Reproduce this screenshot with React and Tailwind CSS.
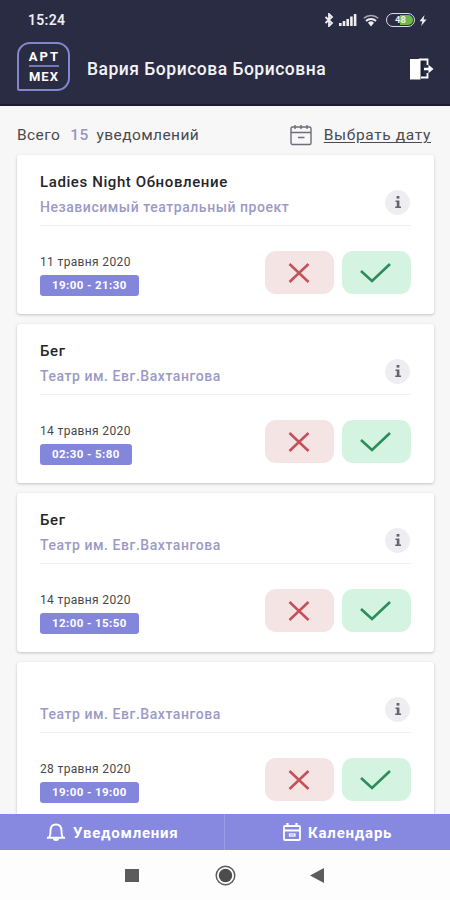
const EVENTS = [
  { id: 1, title: 'Ladies Night Обновление', place: 'Независимый театральный проект', date: '11 травня 2020', time: '19:00 - 21:30' },
  { id: 2, title: 'Бег', place: 'Театр им. Евг.Вахтангова', date: '14 травня 2020', time: '02:30 - 5:80' },
  { id: 3, title: 'Бег', place: 'Театр им. Евг.Вахтангова', date: '14 травня 2020', time: '12:00 - 15:50' },
  { id: 4, title: '', place: 'Театр им. Евг.Вахтангова', date: '28 травня 2020', time: '19:00 - 19:00' },
];

function StatusBar() {
  return (
    <div className="flex h-[38px] items-center pl-7 pr-[23px] pt-[2px] text-[#eeeef3]">
      <span className="text-[14px] font-semibold leading-none tracking-[0.3px]">15:24</span>
      <div className="ml-auto flex items-center">
        <svg className="h-[14px] w-[10px]" viewBox="0 0 10 14" fill="none" stroke="currentColor" strokeWidth="1.8">
          <path d="M1.5 4 8 10 5 13V1l3 3-6.5 6" />
        </svg>
        <svg className="ml-[5px] h-[12px] w-[18px]" viewBox="0 0 18 12" fill="currentColor">
          <rect x="0" y="9" width="2.6" height="3" />
          <rect x="3.7" y="7" width="2.6" height="5" />
          <rect x="7.4" y="5" width="2.6" height="7" />
          <rect x="11.1" y="2.5" width="2.6" height="9.5" />
          <rect x="14.8" y="0" width="2.6" height="12" />
        </svg>
        <svg className="ml-[6px] h-[13px] w-[16px]" viewBox="0 0 16 13" fill="none" stroke="currentColor">
          <path d="M.8 4.3a10.5 10.5 0 0 1 14.4 0" strokeWidth="1.5" opacity=".65" />
          <path d="M3 7a7.3 7.3 0 0 1 10 0" strokeWidth="2" />
          <path d="M5 8.8a4.3 4.3 0 0 1 6 0L8 12.5z" fill="currentColor" stroke="none" />
        </svg>
        <div className="ml-[7px] flex h-[14px] w-[29px] rounded-full border-[1.5px] border-[#dcdce2] p-[1px]">
          <div className="flex w-full items-center justify-center rounded-full bg-linear-to-r from-[#2a2c43] from-50% to-[#6cb848] to-50% text-[9.5px] font-bold leading-none">
            48
          </div>
        </div>
        <svg className="ml-[4px] h-[11px] w-[8px]" viewBox="0 0 8 11" fill="currentColor">
          <path d="M5.5 0 .5 6.3h2.8L2.2 11l5.3-6.5H4.6z" />
        </svg>
      </div>
    </div>
  );
}

function Header() {
  return (
    <header className="h-[106px] shrink-0 border-b-2 border-[#1c1d31] bg-[#2a2c43]">
      <StatusBar />
      <div className="flex h-[62px] items-center pl-[17px] pr-[16px]">
        <div className="mb-[6px] flex h-[49px] w-[53px] flex-col items-center justify-center rounded-[13px] rounded-bl-[2px] border-[2.5px] border-[#8286ca] text-[13px] font-bold leading-none text-white">
          <span className="mr-[-2px] tracking-[2.1px]">АРТ</span>
          <span className="mb-[3px] mt-[2px] h-[2px] w-[30px] bg-[#7377b4]" />
          <span className="mr-[-1px] tracking-[1.1px]">МЕХ</span>
        </div>
        <h1 className="ml-[17px] mt-[2px] whitespace-nowrap text-[17.5px] font-medium leading-none tracking-[0.5px] text-[#f3f3f7]">
          Вария Борисова Борисовна
        </h1>
        <svg className="ml-auto h-[22px] w-[25px]" viewBox="0 0 25 22" fill="none">
          <path d="M1 1h10.500v20.500H1z" fill="#fff" />
          <path d="M10 1.500h8.500v5.500M18.500 15v4.500H12" stroke="#fff" strokeWidth="1.8" />
          <path d="M13 4.500h2.500M13 4.500v12.500h2.500" stroke="#191a2c" strokeWidth="1.4" />
          <path d="M15 9.700h4.500V6.700l5 4.300-5 4.300v-3H15z" fill="#fff" />
        </svg>
      </div>
    </header>
  );
}

function CalendarIcon() {
  return (
    <svg className="mb-[3px] h-[22px] w-[22px]" viewBox="0 0 22 22" fill="none" stroke="#6d6e77" strokeWidth="1.4">
      <rect x="1" y="3" width="20" height="17.5" rx="1.5" />
      <path d="M1 8.5h20M5 1v4M11 1v4M17 1v4M8 13.5h6.5" />
    </svg>
  );
}

function EventCard({ event }) {
  return (
    <article className="h-[159px] shrink-0 rounded-[3px] bg-white px-[23px] shadow-[0_1px_3px_rgba(0,0,0,0.22)]">
      <div className="flex h-[71px] items-start justify-between border-b border-[#f0f0f2]">
        <div className="pt-[17px]">
          <h2 className="h-[20px] whitespace-nowrap text-[15px] font-medium leading-[20px] tracking-[0.6px] text-[#252529]">{event.title}</h2>
          <p className="mt-[5px] whitespace-nowrap text-[14px] font-medium leading-[20px] tracking-[0.55px] text-[#9b9ac6]">{event.place}</p>
        </div>
        <span className="mr-px mt-[35px] flex h-[25px] w-[25px] items-center justify-center rounded-full bg-[#eeeef2]">
          <svg className="h-[13px] w-[8px]" viewBox="0 0 8 13" fill="#63646f">
            <rect x="2.6" y="0" width="2.8" height="2.6" />
            <path d="M1.5 4.5h3.9v6H7V12H1.2v-1.5h1.6V6H1.5z" />
          </svg>
        </span>
      </div>
      <div className="flex justify-between">
        <div className="pt-[28px]">
          <div className="whitespace-nowrap text-[12px] leading-[16px] tracking-[0.35px] text-[#47474b]">{event.date}</div>
          <div className="mt-[5px] flex h-[21px] w-fit items-center rounded-[3px] bg-[#8486dc] px-[12px] text-[11.5px] font-bold leading-none tracking-[0.4px] text-white">
            {event.time}
          </div>
        </div>
        <div className="flex gap-[8px] pt-[25px]">
          <button className="flex h-[43px] w-[69px] items-center justify-center rounded-[11px] bg-[#f4e4e4] pr-[2px]">
            <svg className="h-[20px] w-[22px]" viewBox="0 0 22 20" fill="none" stroke="#c4505a" strokeWidth="2.5">
              <path d="m1.5 1 19 18M20.5 1l-19 18" />
            </svg>
          </button>
          <button className="flex h-[43px] w-[69px] items-center justify-center rounded-[11px] bg-[#d4f4e1] pr-[2px]">
            <svg className="h-[20px] w-[31px]" viewBox="0 0 31 20" fill="none" stroke="#2c8c5b" strokeWidth="2.6">
              <path d="m1 8 11 10L30 1" />
            </svg>
          </button>
        </div>
      </div>
    </article>
  );
}

function TabBar() {
  return (
    <nav className="grid h-[36px] shrink-0 grid-cols-2 bg-[#8689df] text-[15px] font-bold text-white">
      <button className="flex items-center border-r border-[#9a9ce6] pl-[46px]">
        <svg className="h-[18px] w-[20px]" viewBox="0 0 20 18" fill="none" stroke="currentColor" strokeWidth="1.9">
          <path d="M1 14.8h18M3 14.5c1.5-1.5 1.5-3 1.5-6.500C4.500 4 6.500 1.500 10 1.500S15.500 4 15.500 8c0 3.500 0 5 1.500 6.500" />
          <path d="M7 15.500a3 2.500 0 0 0 6 0z" fill="currentColor" stroke="none" />
        </svg>
        <span className="ml-[7px] mt-[2px] tracking-[0.75px]">Уведомления</span>
      </button>
      <button className="flex items-center pl-[58px]">
        <svg className="h-[18px] w-[18px]" viewBox="0 0 18 18" fill="none" stroke="currentColor" strokeWidth="1.8">
          <rect x="1" y="3" width="16" height="14" rx="1" />
          <path d="M1 7.500h16M4.500 0v4M13.500 0v4" strokeWidth="2.2" />
          <rect x="6.500" y="11" width="5.500" height="2" strokeWidth="1.2" />
        </svg>
        <span className="ml-[7px] mt-[2px] tracking-[0.8px]">Календарь</span>
      </button>
    </nav>
  );
}

function SystemNav() {
  return (
    <div className="flex h-[50px] shrink-0 items-center bg-[#fdfdfd] pl-[125px]">
      <span className="h-[13px] w-[14px] bg-[#5c5c5c]" />
      <svg className="ml-[76px] h-[21px] w-[21px]" viewBox="0 0 21 21">
        <circle cx="10.5" cy="10.5" r="9.3" fill="none" stroke="#5c5c5c" strokeWidth="1.5" />
        <circle cx="10.5" cy="10.5" r="6.7" fill="#4c4c4c" />
      </svg>
      <svg className="ml-[74px] h-[15px] w-[14px]" viewBox="0 0 14 15" fill="#5c5c5c">
        <path d="M14 0v15L0 7.5z" />
      </svg>
    </div>
  );
}

export default function App() {
  return (
    <div className="flex h-[900px] w-[450px] flex-col overflow-hidden bg-[#f7f7f8] font-['Roboto',sans-serif]">
      <Header />
      <main className="flex min-h-0 flex-1 flex-col overflow-hidden pl-[17px] pr-4">
        <div className="flex h-[49px] shrink-0 items-center whitespace-nowrap pt-[11px] text-[15.5px] text-[#4a4a4f]">
          <span className="tracking-[0.4px]">Всего</span>
          <span className="ml-[10px] font-medium tracking-[0.4px] text-[#9796bd]">15</span>
          <span className="ml-[8px] tracking-[0.4px]">уведомлений</span>
          <button className="ml-auto flex items-center pr-[3px]">
            <CalendarIcon />
            <span className="ml-[12px] tracking-[0.65px] underline underline-offset-2">Выбрать дату</span>
          </button>
        </div>
        <div className="flex flex-col gap-[10px]">
          {EVENTS.map((event) => (
            <EventCard key={event.id} event={event} />
          ))}
        </div>
      </main>
      <TabBar />
      <SystemNav />
    </div>
  );
}
